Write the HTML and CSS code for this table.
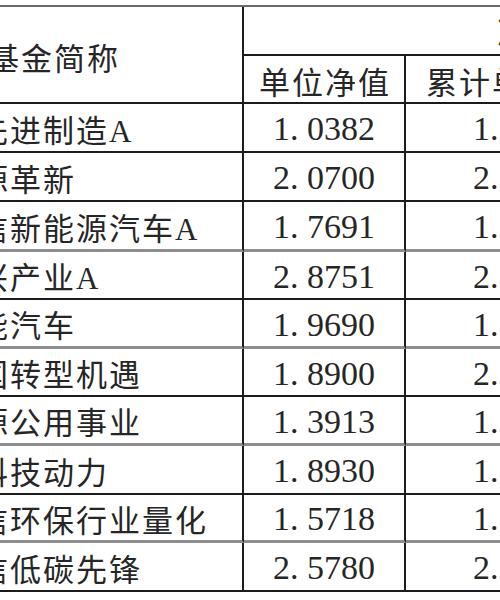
FILE: index.html
```html
<!DOCTYPE html>
<html lang="zh-CN">
<head>
<meta charset="utf-8">
<title>基金净值</title>
<link rel="stylesheet" href="styles.css">
</head>
<body>
<div class="viewport">
  <div class="sheet">
    <div class="cell head name-head">基金简称</div>
    <div class="cell head group">净值数据</div>
    <div class="cell head sub">单位净值</div>
    <div class="cell head sub">累计单位净值</div>
    <div class="cell head sub">日增长率</div>

    <div class="cell name">汇添富先进制造A</div>
    <div class="cell num">1<span class="dp">.</span>0382</div>
    <div class="cell num">1<span class="dp">.</span>0382</div>
    <div class="cell num">0<span class="dp">.</span>52%</div>

    <div class="cell name">华夏能源革新</div>
    <div class="cell num">2<span class="dp">.</span>0700</div>
    <div class="cell num">2<span class="dp">.</span>0700</div>
    <div class="cell num">0<span class="dp">.</span>41%</div>

    <div class="cell name soft">汇丰晋信新能源汽车A</div>
    <div class="cell num soft">1<span class="dp">.</span>7691</div>
    <div class="cell num soft">1<span class="dp">.</span>7691</div>
    <div class="cell num soft">0<span class="dp">.</span>38%</div>

    <div class="cell name">华宝新兴产业A</div>
    <div class="cell num">2<span class="dp">.</span>8751</div>
    <div class="cell num">2<span class="dp">.</span>8751</div>
    <div class="cell num">0<span class="dp">.</span>66%</div>

    <div class="cell name soft">鹏华智能汽车</div>
    <div class="cell num soft">1<span class="dp">.</span>9690</div>
    <div class="cell num soft">1<span class="dp">.</span>9690</div>
    <div class="cell num soft">0<span class="dp">.</span>29%</div>

    <div class="cell name">工银中国转型机遇</div>
    <div class="cell num">1<span class="dp">.</span>8900</div>
    <div class="cell num">2<span class="dp">.</span>1900</div>
    <div class="cell num">0<span class="dp">.</span>47%</div>

    <div class="cell name soft">博时能源公用事业</div>
    <div class="cell num soft">1<span class="dp">.</span>3913</div>
    <div class="cell num soft">1<span class="dp">.</span>5913</div>
    <div class="cell num soft">0<span class="dp">.</span>18%</div>

    <div class="cell name">汇添富科技动力</div>
    <div class="cell num">1<span class="dp">.</span>8930</div>
    <div class="cell num">1<span class="dp">.</span>8930</div>
    <div class="cell num">0<span class="dp">.</span>55%</div>

    <div class="cell name soft">中海建信环保行业量化</div>
    <div class="cell num soft">1<span class="dp">.</span>5718</div>
    <div class="cell num soft">1<span class="dp">.</span>5718</div>
    <div class="cell num soft">0<span class="dp">.</span>33%</div>

    <div class="cell name">汇丰晋信低碳先锋</div>
    <div class="cell num">2<span class="dp">.</span>5780</div>
    <div class="cell num">2<span class="dp">.</span>5780</div>
    <div class="cell num">0<span class="dp">.</span>61%</div>
  </div>
</div>
</body>
</html>
```

FILE: styles.css
```css
html, body {
  margin: 0;
  padding: 0;
  background: #ffffff;
}

.viewport {
  width: 500px;
  height: 600px;
  overflow: hidden;
  padding-top: 5px;
  box-sizing: border-box;
}

.sheet {
  display: grid;
  grid-template-columns: 380px 162px 238px 238px;
  grid-template-rows: 49px 48px 49px 49px 50px 48px 49px 48px 49px 49px 48px 49px;
  width: max-content;
  margin-left: -136px;
  border-top: 2px solid #6a6a6a;
  font-family: "Liberation Serif", "Noto Sans CJK SC", serif;
  color: #262626;
}

.cell {
  box-sizing: border-box;
  display: flex;
  align-items: center;
  border-right: 2px solid #1c1c1c;
  border-bottom: 2px solid #1c1c1c;
  white-space: nowrap;
  overflow: hidden;
}

.cell.soft {
  border-bottom: 3px solid #8e8e8e;
}

.head {
  justify-content: center;
  font-size: 31px;
  letter-spacing: 2px;
  padding-left: 2px;
}

.name-head {
  grid-row: span 2;
  padding-top: 4px;
}

.group {
  grid-column: span 3;
}

.sub {
  padding-top: 2px;
}

.name {
  justify-content: flex-start;
  padding-left: 14px;
  padding-top: 1px;
  font-size: 31px;
  letter-spacing: 2px;
}

.num {
  justify-content: center;
  font-size: 34px;
  padding-top: 3px;
}

.dp {
  margin-right: 0.25em;
}
```
